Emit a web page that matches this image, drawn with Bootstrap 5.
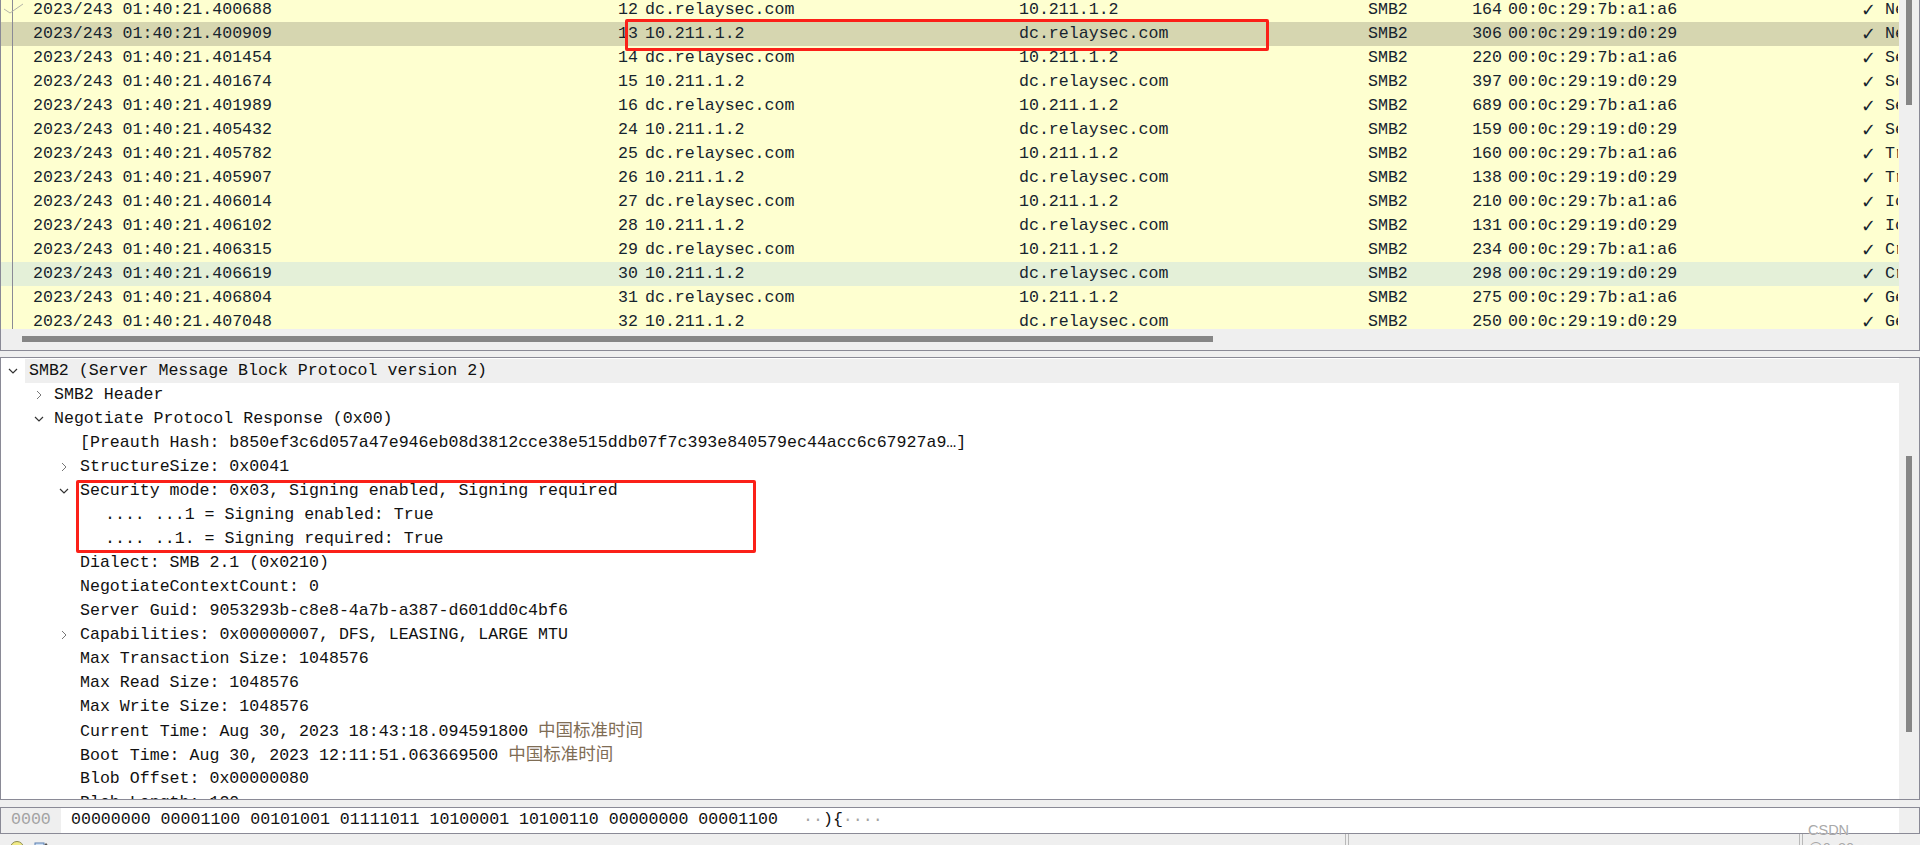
<!DOCTYPE html>
<html lang="zh-CN">
<head>
<meta charset="UTF-8">
<meta name="viewport" content="width=device-width, initial-scale=1">
<title>Wireshark SMB2</title>
<link rel="stylesheet" href="https://cdn.jsdelivr.net/npm/bootstrap@5.3.0/dist/css/bootstrap.min.css">
<style>
:root { --edge: #8a8a96; --chrome: #efefef; --thumb: #868686; --mark: #fb2018; }
body { background: var(--chrome); font-family: "Liberation Mono", "Noto Sans CJK SC", monospace; font-size: 16.6px; line-height: 24px; color: #111; }
.shell { width: 1920px; height: 845px; }
.pane-list { height: 351px; border: 1px solid var(--edge); border-width: 0 1px 1px 1px; }
.pane-tree { height: 443px; margin-top: 6px; border: 1px solid var(--edge); background: #fff; }
.pane-bytes { height: 27px; margin-top: 7px; border: 1px solid var(--edge); background: #fff; }
.pk-body { margin-top: -2px; height: 331px; }
.pk-row { display: grid; grid-template-columns: 12px 20px 460px 145px 7px 374px 349px 62px 72px 6px 353px 24px 13px; height: 24px; background: #feffd0; color: #16242e; white-space: pre; }
.pk-row.hit { background: #d6d6b0; }
.pk-row.ok { background: #e4f0d8; }
.pk-gut { border-right: 1px solid var(--edge); }
.pk-check { font-family: "DejaVu Sans", sans-serif; font-size: 18px; }
.pk-info { overflow: hidden; }
.pk-tick { position: absolute; left: 2px; top: 4px; }
.track-x { height: 20px; padding: 7px 0 0 21px; }
.track-x div { width: 1191px; height: 6px; background: var(--thumb); }
.track-y { width: 20px; flex: none; background: var(--chrome); padding-left: 7px; }
.track-y div { width: 6px; background: var(--thumb); }
.thumb-list { height: 105px; }
.thumb-tree { height: 276px; margin-top: 98px; }
.tr-body { padding-top: 1px; }
.tr-row { height: 24px; white-space: pre; }
.tr-row svg { flex: none; }
.tr-row.top { background: var(--chrome); margin-left: 24px; }
.lv0 { padding-left: 4px; }
.lv1 { padding-left: 53px; }
.lv2 { padding-left: 79px; }
.lv3 { padding-left: 104px; }
.tw { color: #7f6d55; font-size: 17.5px; margin-left: 10px; }
.caret { position: absolute; top: 7px; }
.by-off { width: 60px; flex: none; background: var(--chrome); color: #a3a3a3; padding-left: 10px; }
.by-bits { width: 742px; padding-left: 10px; flex: none; white-space: pre; }
.dim { color: #a3a3a3; }
.status { height: 11px; font-family: "Liberation Sans", "Noto Sans CJK SC", sans-serif; font-size: 14px; }
.status > * { position: relative; top: 7px; }
.bulb { width: 14px; height: 14px; border-radius: 50%; background: #f1ea86; border: 1px solid #8b8a50; flex: none; margin-left: 10px; }
.st-pen { margin-left: 10px; }
.st-name { margin-left: 17px; width: 1280px; font-family: "Liberation Mono", monospace; font-size: 14.5px; white-space: pre; }
.st-sep { width: 4px; height: 20px; top: 0; border: 1px solid #b8b8b8; border-width: 0 1px; flex: none; }
.st-count { margin-left: 14px; width: 436px; white-space: pre; }
.st-prof { margin-left: 14px; white-space: pre; }
.redbox { position: absolute; border: 3px solid var(--mark); border-radius: 2px; }
.box-a { left: 625px; top: 19px; width: 644px; height: 32px; }
.box-b { left: 76px; top: 480px; width: 680px; height: 73px; }
.stamp { position: absolute; left: 1808px; top: 821px; font-family: "Liberation Sans", sans-serif; font-size: 14.5px; line-height: 18px; color: #a9a9a9; text-shadow: 0 0 1px #fff; }
</style>
</head>
<body class="overflow-hidden">
<div class="shell position-relative overflow-hidden">

  <div class="pane-list d-flex flex-column">
    <div class="d-flex">
      <div class="pk-body flex-grow-1 overflow-hidden position-relative" id="pkBody"></div>
      <div class="track-y"><div class="thumb-list"></div></div>
    </div>
    <div class="track-x"><div></div></div>
  </div>

  <div class="pane-tree d-flex overflow-hidden">
    <div class="tr-body flex-grow-1 overflow-hidden" id="trBody"></div>
    <div class="track-y"><div class="thumb-tree"></div></div>
  </div>

  <div class="pane-bytes d-flex">
    <div class="by-off">0000</div>
    <div class="by-bits">00000000 00001100 00101001 01111011 10100001 10100110 00000000 00001100</div>
    <div class="flex-grow-1"><span class="dim">··</span>){<span class="dim">····</span></div>
    <div class="track-y"></div>
  </div>

  <div class="status d-flex">
    <span class="bulb"></span>
    <svg class="st-pen" width="14" height="14" viewBox="0 0 14 14"><rect x="1" y="2" width="9" height="11" fill="#cfe0f4" stroke="#5a7fb0"/><path d="M5 10 12 2l1.500 1.500L6.500 11z" fill="#555"/></svg>
    <span class="st-name">VMware Network Adapter VMnet18: (live capture in progress)</span>
    <span class="st-sep"></span>
    <span class="st-count">分组: 908 · 已显示: 29 (3.2%)</span>
    <span class="st-sep"></span>
    <span class="st-prof">配置: Default</span>
  </div>

  <div class="redbox box-a"></div>
  <div class="redbox box-b"></div>
  <div class="stamp">CSDN @0x30sec</div>
</div>

<script src="https://cdn.jsdelivr.net/npm/bootstrap@5.3.0/dist/js/bootstrap.bundle.min.js"></script>
<script>
const dc = 'dc.relaysec.com';
const ip = '10.211.1.2';
const macA = '00:0c:29:7b:a1:a6';
const macB = '00:0c:29:19:d0:29';

// time, no, from server?, length, info, row class
const packets = [
  ['400688', 12, true, 164, 'Ne', ''],
  ['400909', 13, false, 306, 'Ne', 'hit'],
  ['401454', 14, true, 220, 'Se', ''],
  ['401674', 15, false, 397, 'Se', ''],
  ['401989', 16, true, 689, 'Se', ''],
  ['405432', 24, false, 159, 'Se', ''],
  ['405782', 25, true, 160, 'Tr', ''],
  ['405907', 26, false, 138, 'Tr', ''],
  ['406014', 27, true, 210, 'Io', ''],
  ['406102', 28, false, 131, 'Io', ''],
  ['406315', 29, true, 234, 'Cr', ''],
  ['406619', 30, false, 298, 'Cr', 'ok'],
  ['406804', 31, true, 275, 'Ge', ''],
  ['407048', 32, false, 250, 'Ge', '']
];

document.getElementById('pkBody').innerHTML = packets.map(p => `
  <div class="pk-row ${p[5]}">
    <span class="pk-gut"></span><span></span>
    <span>2023/243 01:40:21.${p[0]}</span>
    <span class="text-end">${p[1]}</span><span></span>
    <span>${p[2] ? dc : ip}</span>
    <span>${p[2] ? ip : dc}</span>
    <span>SMB2</span>
    <span class="text-end">${p[3]}</span><span></span>
    <span>${p[2] ? macA : macB}</span>
    <span class="pk-check">✓</span>
    <span class="pk-info">${p[4]}</span>
  </div>`).join('') +
  '<svg class="pk-tick" width="22" height="14" viewBox="0 0 22 14"><path d="M1 7l6 4L20 2" fill="none" stroke="#b4b4a8" stroke-width="1"/></svg>';

const open = x => `<svg class="caret" style="left:${x}px" width="10" height="10" viewBox="0 0 10 10"><path d="M1 3l4 4 4-4" fill="none" stroke="#333" stroke-width="1.200"/></svg>`;
const shut = x => `<svg class="caret" style="left:${x}px" width="10" height="10" viewBox="0 0 10 10"><path d="M3 1l4 4-4 4" fill="none" stroke="#777" stroke-width="1"/></svg>`;
const tw = '<span class="tw">中国标准时间</span>';

const tree = [
  [0, 'SMB2 (Server Message Block Protocol version 2)', open(7), 'top'],
  [1, 'SMB2 Header', shut(33)],
  [1, 'Negotiate Protocol Response (0x00)', open(33)],
  [2, '[Preauth Hash: b850ef3c6d057a47e946eb08d3812cce38e515ddb07f7c393e840579ec44acc6c67927a9…]'],
  [2, 'StructureSize: 0x0041', shut(58)],
  [2, 'Security mode: 0x03, Signing enabled, Signing required', open(58)],
  [3, '.... ...1 = Signing enabled: True'],
  [3, '.... ..1. = Signing required: True'],
  [2, 'Dialect: SMB 2.1 (0x0210)'],
  [2, 'NegotiateContextCount: 0'],
  [2, 'Server Guid: 9053293b-c8e8-4a7b-a387-d601dd0c4bf6'],
  [2, 'Capabilities: 0x00000007, DFS, LEASING, LARGE MTU', shut(58)],
  [2, 'Max Transaction Size: 1048576'],
  [2, 'Max Read Size: 1048576'],
  [2, 'Max Write Size: 1048576'],
  [2, 'Current Time: Aug 30, 2023 18:43:18.094591800' + tw],
  [2, 'Boot Time: Aug 30, 2023 12:11:51.063669500' + tw],
  [2, 'Blob Offset: 0x00000080'],
  [2, 'Blob Length: 120']
];

document.getElementById('trBody').innerHTML = tree.map(t => {
  if (t[3]) return `<div class="tr-row position-relative">${t[2]}<div class="tr-row top lv0">${t[1]}</div></div>`;
  return `<div class="tr-row position-relative lv${t[0]}">${t[2] || ''}${t[1]}</div>`;
}).join('');
</script>
</body>
</html>
